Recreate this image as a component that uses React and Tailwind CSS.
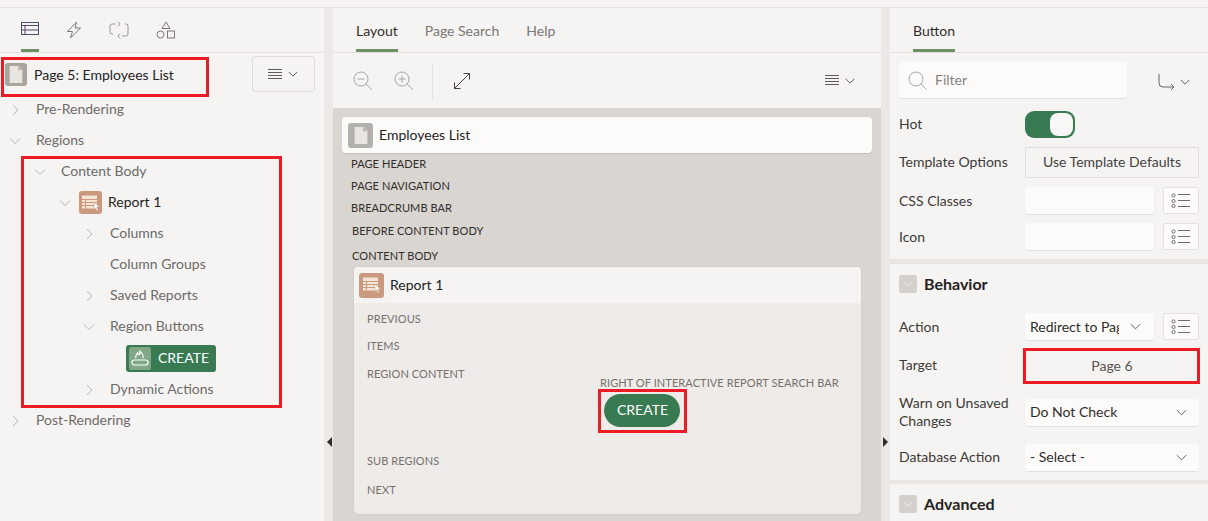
import React from "react";

const font = { fontFamily: 'Lato, "Noto Sans", sans-serif' };

const Chev = ({ dir = "right", className = "", color = "#b8b5b2", size = 14 }) => (
  <svg width={size} height={size} viewBox="0 0 14 14" fill="none" stroke={color} strokeWidth="1" className={className}>
    {dir === "right" ? <path d="M5 2l5 5-5 5" /> : <path d="M2 4.5l5 5 5-5" />}
  </svg>
);

const Doc = () => (
  <svg width={16} height={19} viewBox="0 0 15 18" fill="none">
    <path d="M1.5 1h8l4 4v12h-12z" fill="#e9e6e1" />
    <path d="M9.5 1v4h4z" fill="#b3aca4" stroke="#d5d1cc" strokeWidth=".6" />
  </svg>
);

const DocTile = ({ className }) => (
  <div className={`flex items-center justify-center rounded-[3px] ${className}`}>
    <Doc />
  </div>
);

const ReportTile = ({ className }) => (
  <div className={`relative flex items-center justify-center rounded-[3px] bg-[#cb9a7e] ${className}`}>
    <svg width="20" height="18" viewBox="0 0 20 18" fill="none">
      <rect x="1" y="1.5" width="15" height="13" fill="#f6e4d6" />
      <path d="M1 5.5h15M1 8.5h15M1 11.5h15M4.5 5.5v9" stroke="#cb9a7e" strokeWidth="1" />
      <path d="M13 8l5.5 5-2.6.3 1.4 3-1.3.6-1.4-3-1.6 1.6z" fill="#fff" stroke="#cb9a7e" strokeWidth=".6" />
    </svg>
  </div>
);

const MenuIcon = () => (
  <svg width="14" height="13" viewBox="0 0 14 13" stroke="#5f5c58" strokeWidth="1">
    <path d="M0 1.5h14M0 4.5h14M0 7.5h14M0 10.5h14" />
  </svg>
);

const MenuChev = () => (
  <span className="flex items-center gap-[5px]">
    <MenuIcon />
    <Chev dir="down" color="#4a4845" size={12} />
  </span>
);

const Tab = ({ active, children, className = "" }) => (
  <div className={`flex h-full items-center border-b-[3px] pt-[3px] text-[14px] ${active ? "border-[#6e8f66] text-[#312d2a]" : "border-transparent text-[#7b7875]"} ${className}`}>
    {children}
  </div>
);

const TreeRow = ({ indent, chev, children, text = "text-[#6d6a68]" }) => (
  <div className="flex h-[31px] items-center text-[14px]" style={{ paddingLeft: indent }}>
    <span className="flex w-[14px] shrink-0 justify-center">{chev && <Chev dir={chev} />}</span>
    <span className={`ml-[14px] pb-[2px] ${text}`}>{children}</span>
  </div>
);

const ListBtn = () => (
  <div className="flex h-[27px] w-[36px] items-center justify-center rounded-[2px] border border-[#e4e1de] bg-[#fcfbfa]">
    <svg width="20" height="16" viewBox="0 0 20 16" fill="none" stroke="#716e6b" strokeWidth="1">
      <circle cx="2.5" cy="2.5" r="1.6" /><circle cx="2.5" cy="8" r="1.6" /><circle cx="2.5" cy="13" r="1.6" />
      <path d="M7 1.5h12M7 7.5h12M7 13.5h12" />
    </svg>
  </div>
);

const Field = ({ label, children, className = "", labelClass = "" }) => (
  <div className={`flex items-center ${className}`}>
    <div className={`w-[126px] shrink-0 text-[14px] leading-[18px] text-[#3d3a38] ${labelClass}`}>{label}</div>
    {children}
  </div>
);

const Input = ({ children, className = "w-[129px]" }) => (
  <div className={`flex h-[27px] items-center rounded-[2px] bg-[#fcfbfa] px-[5px] text-[14px] text-[#312d2a] shadow-[0_1px_1px_rgba(0,0,0,0.08)] ${className}`}>
    {children}
  </div>
);

const Section = ({ title }) => (
  <div className="flex h-[18px] items-center gap-[7px]">
    <div className="flex h-[18px] w-[18px] items-center justify-center rounded-[2px] bg-[#d4d1cd]">
      <Chev dir="down" color="#f5f4f2" size={12} />
    </div>
    <span className="text-[16px] font-bold leading-[18px] text-[#25221f]">{title}</span>
  </div>
);

const Mag = ({ plus }) => (
  <svg width="20" height="20" viewBox="0 0 20 20" fill="none" stroke="#a9a6a3" strokeWidth="1">
    <circle cx="8" cy="8" r="7" />
    <path d="M13 13l6 6M4.5 8h7" />
    {plus && <path d="M8 4.5v7" />}
  </svg>
);

const Canvas = ({ children, className = "" }) => (
  <div className={`text-[11px] uppercase leading-[14px] tracking-[0.08px] text-[#312d2a] ${className}`}>{children}</div>
);

const Region = ({ children, className = "" }) => (
  <div className={`text-[11px] uppercase leading-[14px] tracking-[0.08px] text-[#75716d] ${className}`}>{children}</div>
);

const Splitter = () => <div className="w-[9px] shrink-0 bg-[#ebe8e5]" />;

const RedBox = ({ className }) => (
  <div className={`pointer-events-none absolute border-[3px] border-[#ed1c24] ${className}`} />
);

export default function App() {
  return (
    <div className="relative h-[521px] w-[1208px] overflow-hidden bg-[#f5f4f2]" style={font}>
      <div className="h-[8px] border-b border-[#e4e1de] bg-[#f5f4f2]" />
      <div className="flex h-[513px]">
        {/* Left */}
        <div className="w-[324px] shrink-0">
          <div className="flex h-[45px] items-center gap-[27px] border-b border-[#e4e1de] pl-[21px]">
            <div className="flex h-full w-[18px] items-center justify-center border-b-[3px] border-[#6e8f66]">
              <svg width="18" height="14" viewBox="0 0 18 14" fill="none" stroke="#46516a" strokeWidth="1">
                <rect x=".5" y=".5" width="17" height="12" />
                <path d="M.5 3.5h17M.5 8h17" />
                <path d="M4 3.5v9" stroke="#7b2f7a" />
              </svg>
            </div>
            <svg width="16" height="18" viewBox="0 0 16 18" fill="none" stroke="#7b7875" strokeWidth="1">
              <path d="M10.5 1L1.5 10.5h5L4.5 17l10-10h-5.5z" />
            </svg>
            <svg width="20" height="18" viewBox="0 0 20 18" fill="none" stroke="#9a9794" strokeWidth="1">
              <path d="M7 3H3a2 2 0 0 0-2 2v6a2 2 0 0 0 2 2h1M13 15h4a2 2 0 0 0 2-2V5a2 2 0 0 0-2-2h-1" />
              <path d="M9 .5L11 3 9 5.5M11 12.5L9 15l2 2.5" />
            </svg>
            <svg width="20" height="19" viewBox="0 0 20 19" fill="none" stroke="#7b7875" strokeWidth="1">
              <path d="M10 1l4 6.5H6z" />
              <circle cx="4.5" cy="13.5" r="3.5" />
              <rect x="11.5" y="10" width="7" height="7" />
            </svg>
          </div>
          <div className="flex h-[40px] items-center justify-between pl-[5px] pr-[9px] pt-[2px]">
            <div className="flex items-center gap-[7px]">
              <DocTile className="h-[23px] w-[22px] bg-[#aba49c]" />
              <span className="text-[14px] text-[#25221f]">Page 5: Employees List</span>
            </div>
            <div className="flex h-[36px] w-[63px] items-center justify-center rounded-[3px] border border-[#dfdcd9]">
              <MenuChev />
            </div>
          </div>
          <div className="pt-[1px]">
            <TreeRow indent={8} chev="right">Pre-Rendering</TreeRow>
            <TreeRow indent={8} chev="down">Regions</TreeRow>
            <TreeRow indent={33} chev="down">Content Body</TreeRow>
            <div className="flex h-[31px] items-center pl-[58px] text-[14px]">
              <span className="flex w-[14px] justify-center"><Chev dir="down" /></span>
              <ReportTile className="ml-[7px] h-[23px] w-[23px]" />
              <span className="ml-[6px] pb-[2px] text-[#25221f]">Report 1</span>
            </div>
            <TreeRow indent={82} chev="right">Columns</TreeRow>
            <TreeRow indent={82}>Column Groups</TreeRow>
            <TreeRow indent={82} chev="right">Saved Reports</TreeRow>
            <TreeRow indent={82} chev="down">Region Buttons</TreeRow>
            <div className="flex h-[32px] items-center pl-[126px]">
              <div className="flex h-[27px] w-[90px] items-center rounded-[3px] bg-[#387b53] pl-[3px] text-[14px] text-white">
                <div className="flex h-[23px] w-[22px] items-center justify-center rounded-[2px] bg-[#80a886]">
                  <svg width="18" height="16" viewBox="0 0 18 16" fill="none" stroke="#fff" strokeWidth="1.2">
                    <rect x="1" y="10" width="16" height="5" rx="2.5" />
                    <path d="M5 8c-1-3 1-3 1.5-5 1 1 1.5 2 2 2 .5-1 0-3 .5-4 1 2 4 3 3 7" />
                  </svg>
                </div>
                <span className="ml-[7px] pb-[2px]">CREATE</span>
              </div>
            </div>
            <TreeRow indent={82} chev="right">Dynamic Actions</TreeRow>
            <TreeRow indent={8} chev="right">Post-Rendering</TreeRow>
          </div>
        </div>

        <Splitter />

        {/* Center */}
        <div className="flex w-[548px] shrink-0 flex-col">
          <div className="flex h-[45px] shrink-0 items-center gap-[27px] border-b border-[#e4e1de] pl-[23px]">
            <Tab active>Layout</Tab>
            <Tab>Page Search</Tab>
            <Tab>Help</Tab>
          </div>
          <div className="flex h-[55px] shrink-0 items-center pl-[20px] pr-[25px]">
            <Mag />
            <span className="ml-[21px]"><Mag plus /></span>
            <div className="ml-[18px] h-[36px] w-px bg-[#e4e1de]" />
            <svg className="ml-[21px]" width="16" height="16" viewBox="0 0 16 16" fill="none" stroke="#45423f" strokeWidth="1">
              <path d="M.5 15.5l15-15M9.5.5h6v6M.5 9.5v6h6" />
            </svg>
            <span className="ml-auto"><MenuChev /></span>
          </div>
          <div className="flex-1 bg-[#d9d5d1] px-[9px] pt-[9px]">
            <div className="flex h-[36px] items-center gap-[6px] rounded-[4px] bg-[#fcfbfa] pl-[6px] shadow-[0_1px_1px_rgba(0,0,0,0.1)]">
              <DocTile className="h-[25px] w-[25px] bg-[#b3b1ae]" />
              <span className="pb-[2px] text-[14px] text-[#25221f]">Employees List</span>
            </div>
            <Canvas className="ml-[9px] mt-[4px] h-[22px]">Page Header</Canvas>
            <Canvas className="ml-[9px] h-[22px]">Page Navigation</Canvas>
            <Canvas className="ml-[9px] h-[23px]">Breadcrumb Bar</Canvas>
            <Canvas className="ml-[10px] h-[25px]">Before Content Body</Canvas>
            <Canvas className="ml-[10px] h-[11px]">Content Body</Canvas>
            <div className="ml-[12px] mt-[7px] w-[507px] overflow-hidden rounded-[4px] bg-[#efebe8] shadow-[0_0_1px_rgba(0,0,0,0.3)]">
              <div className="flex h-[36px] items-center gap-[6px] bg-[#f5f4f2] pl-[5px]">
                <ReportTile className="h-[25px] w-[25px]" />
                <span className="pb-[2px] text-[14px] text-[#25221f]">Report 1</span>
              </div>
              <div className="h-[211px] pl-[13px] pt-[9px]">
                <Region className="h-[27px]">Previous</Region>
                <Region className="h-[28px]">Items</Region>
                <div className="flex h-[87px]">
                  <Region className="w-[233px]">Region Content</Region>
                  <div className="pt-[3px]">
                    <Region className="mt-[6px] whitespace-nowrap">Right of Interactive Report Search Bar</Region>
                    <div className="ml-[4px] mt-[4px] flex h-[33px] w-[76px] items-center justify-center rounded-full bg-[#387b53] pb-[2px] pl-[1px] text-[14px] text-white">
                      CREATE
                    </div>
                  </div>
                </div>
                <Region className="h-[29px]">Sub Regions</Region>
                <Region>Next</Region>
              </div>
            </div>
          </div>
        </div>

        <Splitter />

        {/* Right */}
        <div className="min-w-0 flex-1">
          <div className="flex h-[45px] items-center border-b border-[#e4e1de] pl-[23px]">
            <Tab active>Button</Tab>
          </div>
          <div className="flex h-[45px] items-end pl-[9px]">
            <div className="flex h-[36px] w-[228px] items-center gap-[8px] rounded-[3px] bg-[#fcfbfa] pl-[9px] text-[14px] text-[#85827f] shadow-[0_1px_1px_rgba(0,0,0,0.08)]">
              <svg width="19" height="19" viewBox="0 0 19 19" fill="none" stroke="#a9a6a3" strokeWidth="1">
                <circle cx="8" cy="8" r="7" /><path d="M13 13l5.5 5.5" />
              </svg>
              <span className="pb-[2px]">Filter</span>
            </div>
            <span className="mb-[8px] ml-[31px] flex items-center gap-[4px]">
              <svg width="17" height="17" viewBox="0 0 17 17" fill="none" stroke="#67645f" strokeWidth="1">
                <path d="M1 1v9a4 4 0 0 0 4 4h11M13 11l3 3-3 3" />
              </svg>
              <Chev dir="down" color="#4a4845" size={12} />
            </span>
          </div>
          <div className="pl-[9px] pr-[9px]">
            <Field label="Hot" labelClass="pb-[2px]" className="mt-[13px] h-[27px]">
              <div className="flex h-[27px] w-[50px] items-center justify-end rounded-[9px] bg-[#387b53] pr-[2px]">
                <div className="h-[23px] w-[23px] rounded-[8px] bg-[#f8f7f5]" />
              </div>
            </Field>
            <Field label="Template Options" labelClass="pb-[2px]" className="mt-[9px] h-[31px]">
              <div className="flex h-[31px] w-[174px] items-center justify-center rounded-[2px] border border-[#dfdcd9] pb-[2px] text-[14px] text-[#44413e]">
                Use Template Defaults
              </div>
            </Field>
            <Field label="CSS Classes" className="mt-[9px]">
              <Input /><span className="ml-[9px]"><ListBtn /></span>
            </Field>
            <Field label="Icon" className="mt-[9px]">
              <Input /><span className="ml-[9px]"><ListBtn /></span>
            </Field>
          </div>
          <div className="mt-[9px] h-[5px] bg-[#e8e5e2]" />
          <div className="pl-[9px] pr-[9px]">
            <div className="mt-[11px]"><Section title="Behavior" /></div>
            <Field label="Action" className="mt-[20px]">
              <Input>
                <span className="w-[89px] overflow-hidden whitespace-nowrap">Redirect to Page</span>
                <Chev dir="down" color="#55524f" size={13} className="ml-[10px]" />
              </Input>
              <span className="ml-[9px]"><ListBtn /></span>
            </Field>
            <Field label="Target" className="mt-[10px] h-[30px]">
              <div className="flex h-[30px] w-[174px] items-center justify-center text-[14px] text-[#55524f]">Page 6</div>
            </Field>
            <Field label={<>Warn on Unsaved<br />Changes</>} className="mt-[14px]">
              <Input className="w-[174px] justify-between pr-[11px]">
                <span className="pb-[2px]">Do Not Check</span> <Chev dir="down" color="#55524f" size={13} />
              </Input>
            </Field>
            <Field label="Database Action" labelClass="pb-[2px]" className="mt-[14px]">
              <Input className="w-[174px] justify-between pr-[11px]">
                <span className="pb-[2px]">- Select -</span> <Chev dir="down" color="#55524f" size={13} />
              </Input>
            </Field>
          </div>
          <div className="mt-[9px] h-[4px] bg-[#e8e5e2]" />
          <div className="mt-[11px] pl-[9px]"><Section title="Advanced" /></div>
        </div>
      </div>

      {/* splitter arrows */}
      <span className="absolute left-[327px] top-[437px] h-0 w-0 border-y-[5px] border-r-[5px] border-y-transparent border-r-[#312d2a]" />
      <span className="absolute left-[883px] top-[437px] h-0 w-0 border-y-[5px] border-l-[5px] border-y-transparent border-l-[#312d2a]" />

      {/* annotation boxes */}
      <RedBox className="left-[1px] top-[57px] h-[40px] w-[208px]" />
      <RedBox className="left-[21px] top-[156px] h-[252px] w-[261px]" />
      <RedBox className="left-[598px] top-[389px] h-[44px] w-[89px]" />
      <RedBox className="left-[1023px] top-[348px] h-[36px] w-[177px]" />
    </div>
  );
}
